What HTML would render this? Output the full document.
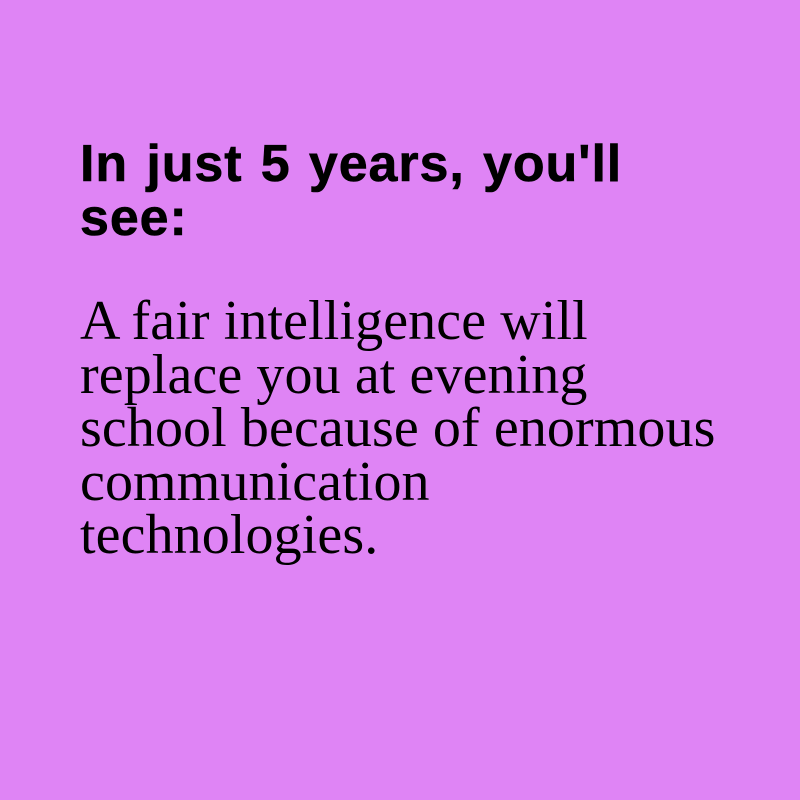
<!DOCTYPE html>
<html><head><meta charset="utf-8"><style>
html,body{margin:0;padding:0}
body{width:800px;height:800px;background:#df84f5;position:relative;overflow:hidden}
.h{position:absolute;left:80px;top:137px;font-family:"Liberation Sans",Arial,sans-serif;font-weight:bold;font-size:52px;line-height:54px;letter-spacing:0.9px;word-spacing:3px;color:#000;white-space:nowrap;-webkit-text-stroke:0.6px #000}
.b{position:absolute;left:80px;top:295px;font-family:"Liberation Serif","Times New Roman",serif;font-size:56px;line-height:53.5px;letter-spacing:0.1px;color:#000;white-space:nowrap}
</style></head><body>
<div class="h">In just 5 years, you'll<br>see:</div>
<div class="b">A fair intelligence will<br>replace you at evening<br>school because of enormous<br>communication<br>technologies.</div>
</body></html>
